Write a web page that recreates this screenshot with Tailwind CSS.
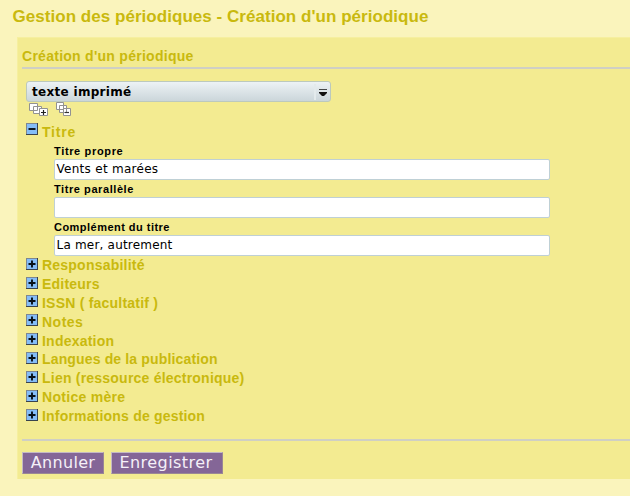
<!DOCTYPE html>
<html lang="fr">
<head>
<meta charset="utf-8">
<title>Gestion des périodiques</title>
<script src="https://cdn.jsdelivr.net/npm/@tailwindcss/browser@4"></script>
</head>
<body class="h-[496px] overflow-hidden bg-[#faf4bc] font-['Liberation_Sans',Arial,sans-serif] text-[#c9b90e]">
<svg class="hidden">
  <symbol id="plus" viewBox="0 0 12 12"><path d="M0 0h12v12H0z" fill="#7d8791"/><path d="M12 0v12H0v-1h11V0z" fill="#39434d"/><path d="M1 1h10v10H1z" fill="#84bdf8"/><path d="M2.5 6h7M6 2.5v7" stroke="#071018" stroke-width="1.9"/></symbol>
  <symbol id="minus" viewBox="0 0 12 12"><path d="M0 0h12v12H0z" fill="#7d8791"/><path d="M12 0v12H0v-1h11V0z" fill="#39434d"/><path d="M1 1h10v10H1z" fill="#84bdf8"/><path d="M2.5 6h7" stroke="#071018" stroke-width="1.9"/></symbol>
</svg>
<h1 class="h-[37px] pl-[12.5px] pt-[5px] text-[17px] leading-[24px] font-bold whitespace-nowrap tracking-[0.04px]">Gestion des périodiques - Création d'un périodique</h1>
<main class="ml-[17px] h-[442px] border-t border-l border-[#f6ef9f] bg-[#f3eb91] pl-1">
  <h2 class="h-[29px] pt-[8px] text-[14px] leading-[20px] font-bold tracking-[0.27px]">Création d'un périodique</h2>
  <div class="h-[2px] bg-[#cfcfc4]"></div>
  <div class="pl-[4px] pt-[12px]">
    <div class="flex h-[21px] w-[304.500px] items-center rounded-[3px] border border-[#bcc9bd] bg-linear-to-b from-[#edf2f5] to-[#cbd6da] pl-[5px] text-black">
      <span class="flex-1 font-['DejaVu_Sans',sans-serif] text-[12px] leading-[18px] font-bold tracking-[0.3px]">texte imprimé</span>
      <span class="h-[16px] w-[2px] bg-[#e3eaec]"></span>
      <svg class="ml-[2px] mr-[2px] h-[10px] w-[10px]" viewBox="0 0 10 10"><path d="M1 2.5h8" stroke="#46494b"/><path d="M1 5h8v1L6 9H4L1 6z" fill="#111"/></svg>
    </div>
    <div class="flex h-[20.5px] items-start gap-[8px] pl-[3px]">
      <svg class="h-[15px] w-[19px]" viewBox="0 0 19 15"><g fill="#fff" stroke="#929292"><path d="M.5 1.5h8v7h-8zM4.5 4.5h8v7h-8z"/><path d="M10.500 6.500h8v7h-8z"/></g><path d="M12 10.500h5M14.500 8v5" stroke="#222" stroke-width="1.200"/></svg>
      <svg class="h-[15px] w-[16px]" viewBox="0 0 16 15"><g fill="#fff" stroke="#929292"><path d="M.5.5h7v7h-7zM3.500 3.500h7v7h-7zM7.500 6.500h7v7h-7z"/></g><path d="M9 10.500h4" stroke="#333" stroke-width="1.200"/></svg>
    </div>
    <div class="flex h-[21.5px] items-start gap-[4px]"><svg class="mt-[0.5px] h-[12px] w-[12px]"><use href="#minus"/></svg><h3 class="-mt-px text-[14px] leading-[20px] font-bold tracking-[0.8px]">Titre</h3></div>
    <div class="-mt-px ml-[28px] w-[496px] text-black">
      <div class="h-[38px]"><label class="block h-[16px] text-[11px] leading-[16px] font-bold tracking-[0.65px]">Titre propre</label><div class="h-[21px] rounded-[2px] border border-[#bfd0d5] bg-white pl-[1.500px] font-['DejaVu_Sans',sans-serif] text-[12px] leading-[19px] tracking-[0.28px]">Vents et marées</div></div>
      <div class="h-[38px]"><label class="block h-[16px] text-[11px] leading-[16px] font-bold tracking-[0.57px]">Titre parallèle</label><div class="h-[21px] rounded-[2px] border border-[#bfd0d5] bg-white"></div></div>
      <div class="h-[38px]"><label class="block h-[16px] text-[11px] leading-[16px] font-bold tracking-[0.47px]">Complément du titre</label><div class="h-[21px] rounded-[2px] border border-[#bfd0d5] bg-white pl-[1.500px] font-['DejaVu_Sans',sans-serif] text-[12px] leading-[19px] tracking-[0.2px]">La mer, autrement</div></div>
    </div>
    <div class="text-[14px] leading-[16px] font-bold tracking-[0.22px]">
      <div class="flex h-[18.9px] items-start gap-[4px]"><svg class="mt-px h-[12px] w-[12px]"><use href="#plus"/></svg><h3>Responsabilité</h3></div>
      <div class="flex h-[18.9px] items-start gap-[4px]"><svg class="mt-[0.7px] h-[12px] w-[12px]"><use href="#plus"/></svg><h3>Editeurs</h3></div>
      <div class="flex h-[18.9px] items-start gap-[4px]"><svg class="mt-[0.7px] h-[12px] w-[12px]"><use href="#plus"/></svg><h3>ISSN ( facultatif )</h3></div>
      <div class="flex h-[18.9px] items-start gap-[4px]"><svg class="mt-[0.7px] h-[12px] w-[12px]"><use href="#plus"/></svg><h3 class="tracking-[0.5px]">Notes</h3></div>
      <div class="flex h-[18.9px] items-start gap-[4px]"><svg class="mt-[0.7px] h-[12px] w-[12px]"><use href="#plus"/></svg><h3>Indexation</h3></div>
      <div class="flex h-[18.9px] items-start gap-[4px]"><svg class="mt-[0.7px] h-[12px] w-[12px]"><use href="#plus"/></svg><h3 class="tracking-[0.15px]">Langues de la publication</h3></div>
      <div class="flex h-[18.9px] items-start gap-[4px]"><svg class="mt-[0.7px] h-[12px] w-[12px]"><use href="#plus"/></svg><h3>Lien (ressource électronique)</h3></div>
      <div class="flex h-[18.9px] items-start gap-[4px]"><svg class="mt-[0.7px] h-[12px] w-[12px]"><use href="#plus"/></svg><h3 class="tracking-[0.3px]">Notice mère</h3></div>
      <div class="flex h-[18.9px] items-start gap-[4px]"><svg class="mt-[0.7px] h-[12px] w-[12px]"><use href="#plus"/></svg><h3 class="tracking-[0.19px]">Informations de gestion</h3></div>
    </div>
  </div>
  <div class="mt-[12px] h-[2px] bg-[#cfcfc4]"></div>
  <div class="mt-[11px] flex gap-[7px] font-['DejaVu_Sans',sans-serif] text-[16px] leading-[20px] tracking-[0.3px] text-[#f5f0f8]">
    <button class="h-[22px] w-[82px] border border-t-[#c4b9c5] border-l-[#c4b9c5] border-r-[#9a8795] border-b-[#9a8795] bg-[#846697]">Annuler</button>
    <button class="h-[22px] w-[112px] border border-t-[#c4b9c5] border-l-[#c4b9c5] border-r-[#9a8795] border-b-[#9a8795] bg-[#846697] pr-[2px] tracking-[0.45px]">Enregistrer</button>
  </div>
</main>
</body>
</html>
